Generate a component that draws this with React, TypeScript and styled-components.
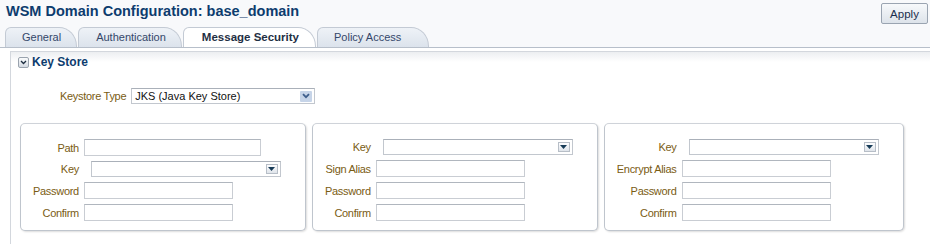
import React from "react";
import styled, { createGlobalStyle } from "styled-components";

const GlobalStyle = createGlobalStyle`
  html, body {
    margin: 0;
    padding: 0;
    background: #fff;
    overflow: hidden;
  }
  body {
    font-family: "Liberation Sans", Arial, sans-serif;
    font-size: 11px;
  }
`;

const Page = styled.div`
  width: 930px;
  height: 244px;
  overflow: hidden;
`;

const Top = styled.div`
  background: #f8f9fb;
`;

const Header = styled.div`
  display: flex;
  align-items: flex-start;
  height: 26px;
  padding-left: 6px;
`;

const Title = styled.h1`
  flex: 1;
  margin: 3px 0 0;
  font-size: 14.5px;
  font-weight: bold;
  color: #0d3c6e;
  white-space: nowrap;
`;

const Buttons = styled.div`
  display: flex;
  gap: 2px;
  margin-top: 3px;
  margin-right: -10px;
`;

const Button = styled.button`
  width: 47px;
  height: 21px;
  padding: 0;
  border: 1px solid #9aa4b1;
  border-radius: 2px;
  background: linear-gradient(#f7f9fb, #dde3ea);
  color: #1b2e4d;
  font-family: inherit;
  font-size: 11.5px;
`;

const ButtonEdge = styled.span`
  width: 10px;
  height: 21px;
  box-sizing: border-box;
  border: 1px solid #8d97a5;
  border-radius: 2px;
  background: linear-gradient(#f7f9fb, #dde3ea);
`;

const TabBar = styled.div`
  display: flex;
  align-items: flex-end;
  height: 20px;
  margin-top: 1px;
  padding-left: 5px;
  border-bottom: 1px solid #b7bfca;
`;

const Tab = styled.div<{ $active?: boolean; $pl: number; $pr: number }>`
  height: 19px;
  line-height: 19px;
  padding: 0 ${(p) => p.$pr}px 0 ${(p) => p.$pl}px;
  margin-right: 1px;
  border: 1px solid #c3cad4;
  border-bottom: none;
  border-radius: 6px 18px 0 0 / 6px 19px 0 0;
  background: ${(p) => (p.$active ? "#fff" : "linear-gradient(#eef2f7, #dce3ec)")};
  color: ${(p) => (p.$active ? "#1f2f44" : "#34476a")};
  font-weight: ${(p) => (p.$active ? "bold" : "normal")};
  font-size: ${(p) => (p.$active ? "11.5px" : "11px")};
  white-space: nowrap;
`;

const Content = styled.div`
  margin: 3px 0 0 10px;
  height: 200px;
  border-top: 1px solid #d3d7dd;
  border-left: 1px solid #d3d7dd;
  background: linear-gradient(#eceef1 0, #fff 10px);
`;

const SectionHeader = styled.div`
  display: flex;
  align-items: center;
  gap: 3px;
  padding: 3px 0 0 7px;
`;

const Toggle = styled.span`
  display: flex;
  align-items: center;
  justify-content: center;
  width: 11px;
  height: 11px;
  box-sizing: border-box;
  border: 1px solid #9aa3ae;
  border-radius: 2px;
  background: linear-gradient(#fafbfc, #d5dbe3);
`;

const SectionTitle = styled.span`
  font-size: 12px;
  font-weight: bold;
  color: #0d3c6e;
`;

const TypeRow = styled.div`
  display: flex;
  align-items: center;
  gap: 5px;
  margin-top: 19px;
  padding-left: 49px;
`;

const Label = styled.label`
  color: #7a5c13;
  letter-spacing: -0.3px;
  white-space: nowrap;
  text-align: right;
`;

const ChoiceBox = styled.div<{ $width: number }>`
  display: flex;
  align-items: center;
  justify-content: space-between;
  width: ${(p) => p.$width}px;
  height: 16px;
  box-sizing: border-box;
  padding: 0 2px 0 3px;
  border: 1px solid #c2c7ce;
  border-top-color: #aab0b9;
  background: #fff;
  color: #111;
`;

const BlueArrow = styled.span`
  display: flex;
  align-items: center;
  justify-content: center;
  width: 12px;
  height: 11px;
  background: #c6d4e8;
  border-radius: 1px;
`;

const GrayArrow = styled.span`
  display: flex;
  align-items: center;
  justify-content: center;
  width: 12px;
  height: 10px;
  box-sizing: border-box;
  border: 1px solid #b7bec7;
  background: linear-gradient(#fdfdfe, #dfe4ea);
`;

const Panels = styled.div`
  display: flex;
  align-items: flex-start;
  gap: 6px;
  margin-top: 19px;
  padding-left: 9px;
`;

const Panel = styled.div`
  display: grid;
  grid-template-columns: auto auto;
  column-gap: 5px;
  row-gap: 5px;
  align-items: center;
  padding: 15px 24px 9px 12px;
  border: 1px solid #bfc5cd;
  border-top-color: #cfd3d9;
  border-radius: 5px;
  background: #fff;
  box-shadow: 1px 1px 2px rgba(0, 0, 0, 0.14);
`;

const Input = styled.input<{ $width?: number }>`
  width: ${(p) => p.$width ?? 149}px;
  height: 17px;
  box-sizing: border-box;
  margin: 0;
  border: 1px solid #c9cdd3;
  border-top-color: #b0b6be;
  background: #fff;
  justify-self: start;
`;

const KeySelect = styled(ChoiceBox)`
  margin-left: 7px;
  justify-self: start;
`;

type Field = { label: string; kind: "input" | "select"; width?: number };

const panels: Field[][] = [
  [
    { label: "Path", kind: "input", width: 177 },
    { label: "Key", kind: "select" },
    { label: "Password", kind: "input" },
    { label: "Confirm", kind: "input" },
  ],
  [
    { label: "Key", kind: "select" },
    { label: "Sign Alias", kind: "input" },
    { label: "Password", kind: "input" },
    { label: "Confirm", kind: "input" },
  ],
  [
    { label: "Key", kind: "select" },
    { label: "Encrypt Alias", kind: "input" },
    { label: "Password", kind: "input" },
    { label: "Confirm", kind: "input" },
  ],
];

const tabs = [
  { name: "General", pl: 16, pr: 15 },
  { name: "Authentication", pl: 17, pr: 15 },
  { name: "Message Security", pl: 18, pr: 16, active: true },
  { name: "Policy Access", pl: 16, pr: 27 },
];

export default function App() {
  return (
    <Page>
      <GlobalStyle />
      <Top>
        <Header>
          <Title>WSM Domain Configuration: base_domain</Title>
          <Buttons>
            <Button>Apply</Button>
            <ButtonEdge aria-hidden />
          </Buttons>
        </Header>
        <TabBar>
          {tabs.map((t) => (
            <Tab key={t.name} $active={t.active} $pl={t.pl} $pr={t.pr}>
              {t.name}
            </Tab>
          ))}
        </TabBar>
      </Top>
      <Content>
        <SectionHeader>
          <Toggle>
            <svg width="7" height="5" viewBox="0 0 7 5">
              <path d="M1 1l2.5 2.5L6 1" stroke="#1d2d40" strokeWidth="1.3" fill="none" />
            </svg>
          </Toggle>
          <SectionTitle>Key Store</SectionTitle>
        </SectionHeader>
        <TypeRow>
          <Label>Keystore Type</Label>
          <ChoiceBox $width={184}>
            <span>JKS (Java Key Store)</span>
            <BlueArrow>
              <svg width="8" height="6" viewBox="0 0 8 6">
                <path d="M1 1.2l3 3 3-3" stroke="#3f5f8c" strokeWidth="1.8" fill="none" />
              </svg>
            </BlueArrow>
          </ChoiceBox>
        </TypeRow>
        <Panels>
          {panels.map((fields, i) => (
            <Panel key={i}>
              {fields.map((f) => (
                <React.Fragment key={f.label}>
                  <Label>{f.label}</Label>
                  {f.kind === "input" ? (
                    <Input $width={f.width} />
                  ) : (
                    <KeySelect $width={190}>
                      <span />
                      <GrayArrow>
                        <svg width="7" height="4" viewBox="0 0 7 4">
                          <path d="M0 0h7L3.5 4z" fill="#173b57" />
                        </svg>
                      </GrayArrow>
                    </KeySelect>
                  )}
                </React.Fragment>
              ))}
            </Panel>
          ))}
        </Panels>
      </Content>
    </Page>
  );
}
